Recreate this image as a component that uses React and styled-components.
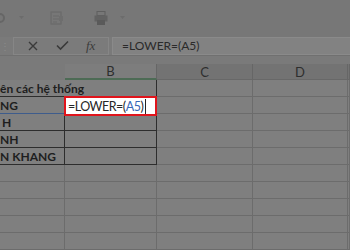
import React from 'react';
import styled, { createGlobalStyle } from 'styled-components';

const GlobalStyle = createGlobalStyle`
  body {
    margin: 0;
    background: #7a7a7a;
    font-family: Lato, "Open Sans", sans-serif;
  }
`;

const Page = styled.div`
  width: 350px;
  height: 250px;
  overflow: hidden;
  display: flex;
  flex-direction: column;
  background: #7a7a7a;
`;

const Toolbar = styled.div`
  height: 40px;
  display: flex;
  align-items: center;
  gap: 6px;
  background: #777777;
`;

const ToolIcon = styled.svg`
  flex: none;
  margin-left: ${(p) => p.$ml || 0}px;
`;

const FormulaBar = styled.div`
  height: 20px;
  display: flex;
  align-items: stretch;
  border-bottom: 1px solid #707070;
`;

const Grip = styled.div`
  width: 13px;
  display: flex;
  align-items: center;
  color: #8a8a8a;
  font-size: 10px;
`;

const FxBox = styled.div`
  width: 96px;
  box-sizing: border-box;
  border: 1px solid #868686;
  display: flex;
  align-items: center;
  justify-content: space-around;
  padding: 0 4px;
  background: #7b7b7b;
`;

const Fx = styled.span`
  font-family: "Liberation Serif", serif;
  font-style: italic;
  font-size: 13px;
  color: #3c3c3c;
`;

const FormulaInput = styled.div`
  flex: 1;
  margin-left: 3px;
  box-sizing: border-box;
  border: 1px solid #8a8a8a;
  border-right: none;
  background: #828282;
  display: flex;
  align-items: center;
  padding-left: 9px;
  font-size: 12px;
  color: #2a2a2a;
`;

const Gap = styled.div`
  height: 9px;
`;

const Sheet = styled.div`
  display: grid;
  grid-template-columns: 65px 92px 96px 95px 1fr;
  grid-template-rows: 16px repeat(10, 17px);
`;

const Head = styled.div`
  box-sizing: border-box;
  display: flex;
  align-items: center;
  justify-content: center;
  font-size: 13px;
  color: #2e2e2e;
  background: ${(p) => (p.$active ? '#7d7d7d' : p.$blank ? '#7a7a7a' : '#737373')};
  border-right: 1px solid ${(p) => (p.$blank ? 'transparent' : '#666666')};
  border-bottom: ${(p) => (p.$active ? '2px solid #4d6b55' : p.$blank ? 'none' : '1px solid #686868')};
`;

const Cell = styled.div`
  position: relative;
  box-sizing: border-box;
  display: flex;
  align-items: center;
  white-space: nowrap;
  overflow: visible;
  font-size: 12px;
  font-weight: 700;
  color: #1e1e1e;
  background: #7f7f7f;
  padding-left: ${(p) => p.$pad || 0}px;
  grid-column: ${(p) => p.$span || 'auto'};
  border-right: 1px solid ${(p) => (p.$table ? '#2d2d2d' : '#6c6c6c')};
  border-bottom: 1px solid ${(p) => (p.$ref ? '#3e5c8c' : p.$table ? '#2d2d2d' : '#6c6c6c')};
`;

const Editor = styled.div`
  position: absolute;
  top: -1px;
  left: -1px;
  width: 93px;
  height: 20px;
  box-sizing: border-box;
  border: 2.5px solid #e0141b;
  background: #ffffff;
  display: flex;
  align-items: center;
  padding-left: 2px;
  font-size: 12.5px;
  letter-spacing: -0.5px;
  font-weight: 400;
  color: #262626;
  z-index: 2;
`;

const Ref = styled.span`
  color: #3868b8;
`;

const Caret = styled.span`
  display: inline-block;
  width: 1px;
  height: 15px;
  background: #222;
  margin-left: 2px;
`;

function ToolbarRow() {
  return (
    <Toolbar>
      <ToolIcon width="7" height="12" viewBox="0 0 7 12" $ml={0}>
        <path d="M0 2 A4 4 0 0 1 0 10" stroke="#666" strokeWidth="2" fill="none" />
      </ToolIcon>
      <ToolIcon width="5" height="4" viewBox="0 0 5 4" $ml={6}>
        <path d="M0 0 L5 0 L2.5 3 Z" fill="#6c6c6c" />
      </ToolIcon>
      <ToolIcon width="14" height="16" viewBox="0 0 14 16" $ml={20}>
        <rect x="1" y="2" width="10" height="12" fill="none" stroke="#6a6a6a" strokeWidth="1.2" />
        <path d="M3 6h6M3 9h6M3 12h4" stroke="#6a6a6a" strokeWidth="1" />
        <rect x="9" y="6" width="4" height="5" fill="#6e6e6e" />
      </ToolIcon>
      <ToolIcon width="14" height="14" viewBox="0 0 14 14" $ml={24}>
        <rect x="3" y="0.5" width="8" height="4" fill="none" stroke="#5f5f5f" />
        <rect x="0.5" y="4.5" width="13" height="6" fill="#626262" />
        <rect x="3" y="9" width="8" height="5" fill="#5a5a5a" />
      </ToolIcon>
      <ToolIcon width="5" height="4" viewBox="0 0 5 4" $ml={6}>
        <path d="M0 0 L5 0 L2.5 3 Z" fill="#6c6c6c" />
      </ToolIcon>
    </Toolbar>
  );
}

const rows = [
  { a: 'ên các hệ thống', merged: true },
  { a: 'NG', editing: true },
  { a: 'H', pad: 2 },
  { a: 'NH' },
  { a: 'N KHANG' },
];

export default function App() {
  return (
    <>
      <GlobalStyle />
      <Page>
        <ToolbarRow />
        <FormulaBar>
          <Grip>⋮</Grip>
          <FxBox>
            <svg width="12" height="12" viewBox="0 0 12 12">
              <path d="M2 2 L10 10 M10 2 L2 10" stroke="#3a3a3a" strokeWidth="1.4" />
            </svg>
            <svg width="13" height="11" viewBox="0 0 13 11">
              <path d="M1 5.5 L4.5 9 L12 1.5" stroke="#3a3a3a" strokeWidth="1.6" fill="none" />
            </svg>
            <Fx>fx</Fx>
          </FxBox>
          <FormulaInput>=LOWER=(A5)</FormulaInput>
        </FormulaBar>
        <Gap />
        <Sheet>
          <Head $blank />
          <Head $active>B</Head>
          <Head>C</Head>
          <Head>D</Head>
          <Head />
          {rows.map((r, i) => (
            <React.Fragment key={i}>
              {r.merged ? (
                <Cell $span="span 2" $table>{r.a}</Cell>
              ) : (
                <>
                  <Cell $table $ref={r.editing} $pad={r.pad}>{r.a}</Cell>
                  <Cell $table>
                    {r.editing && (
                      <Editor>
                        =LOWER=(<Ref>A5</Ref>)<Caret />
                      </Editor>
                    )}
                  </Cell>
                </>
              )}
              <Cell />
              <Cell />
              <Cell />
            </React.Fragment>
          ))}
          {Array.from({ length: 5 }).map((_, i) => (
            <React.Fragment key={'e' + i}>
              <Cell />
              <Cell />
              <Cell />
              <Cell />
              <Cell />
            </React.Fragment>
          ))}
        </Sheet>
      </Page>
    </>
  );
}
